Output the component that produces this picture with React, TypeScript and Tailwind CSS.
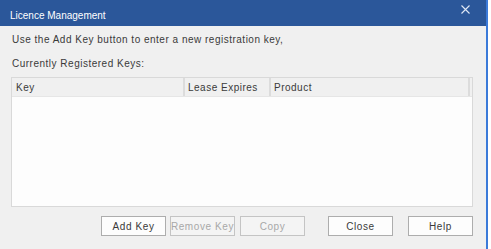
import React from "react";

const font = { fontFamily: '"Liberation Sans", Arial, sans-serif' };

function Btn({ label, disabled }: { label: string; disabled?: boolean }) {
  return (
    <div
      className={`w-[65px] h-[20px] flex items-center justify-center border whitespace-nowrap text-[10px] tracking-[0.6px] ${
        disabled ? "border-[#c4c4c4] bg-[#f4f4f4] text-[#a8a8a8]" : "border-[#adadad] bg-[#fdfdfd] text-[#3a3a3a]"
      }`}
    >
      {label}
    </div>
  );
}

export default function App() {
  return (
    <div className="w-[491px] h-[249px] bg-white flex" style={font}>
      <div className="w-[488px] h-[249px] bg-[#f0f0f0] border-r-2 border-[#3b7ad9] flex flex-col">
        <div className="h-[26px] bg-[#2b579a] flex items-start justify-between pl-[10px] pr-[16px]">
          <span className="text-white text-[10px] mt-[10px] leading-[12px]">Licence Management</span>
          <svg width="9" height="9" viewBox="0 0 9 9" className="mt-[5px]">
            <path d="M0.5 0.5 L8.5 8.5 M8.5 0.5 L0.5 8.5" stroke="#dfe8f5" strokeWidth="1.1" />
          </svg>
        </div>
        <div className="px-[11px] pt-[8px] flex flex-col text-[#3a3a3a] text-[10px] tracking-[0.5px]">
          <div className="pl-[1px] h-[12px] leading-[12px]">Use the Add Key button to enter a new registration key,</div>
          <div className="pl-[1px] mt-[12px] h-[12px] leading-[12px]">Currently Registered Keys:</div>
          <div className="mt-[7px] w-[462px] h-[130px] border border-[#d9d9d9] bg-[#fdfdfd] flex flex-col">
            <div className="h-[19px] flex bg-[#f0f0f0] border-b border-[#e6e6e6]">
              <div className="w-[173px] border-r-2 border-[#dcdcdc] pl-[4px] flex items-center">Key</div>
              <div className="w-[86px] border-r-2 border-[#dcdcdc] pl-[3px] flex items-center">Lease Expires</div>
              <div className="flex-1 border-r-2 border-[#dcdcdc] pl-[3px] flex items-center">Product</div>
              <div className="w-[2px]" />
            </div>
          </div>
          <div className="mt-[9px] flex pl-[90px]">
            <Btn label="Add Key" />
            <div className="w-[4px]" />
            <Btn label="Remove Key" disabled />
            <div className="w-[5px]" />
            <Btn label="Copy" disabled />
            <div className="w-[23px]" />
            <Btn label="Close" />
            <div className="w-[15px]" />
            <Btn label="Help" />
          </div>
        </div>
      </div>
    </div>
  );
}
